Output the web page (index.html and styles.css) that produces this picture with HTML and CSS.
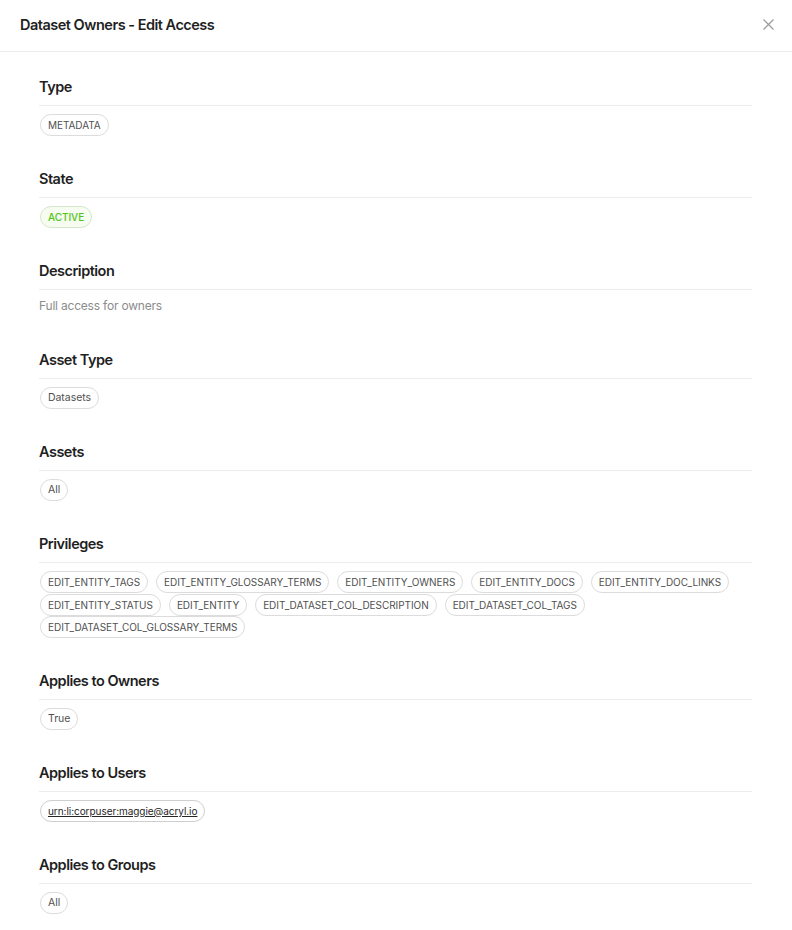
FILE: index.html
```html
<!DOCTYPE html>
<html lang="en">
<head>
    <meta charset="UTF-8">
    <meta name="viewport" content="width=device-width, initial-scale=1.0">
    <title>Dataset Owners - Edit Access</title>
    <link rel="stylesheet" href="styles.css">
</head>
<body>
    <div class="modal">
        <div class="modal-header">
            <h2>Dataset Owners - Edit Access</h2>
            <button class="btn-close" aria-label="Close">
                <svg width="11" height="11" viewBox="0 0 11 11">
                    <path d="M0.5 0.5 L10.5 10.5 M10.5 0.5 L0.5 10.5" stroke="#9a9a9a" stroke-width="1.2" fill="none"/>
                </svg>
            </button>
        </div>

        <div class="modal-body">
            <section class="section">
                <h3>Type</h3>
                <div class="tags">
                    <span class="tag">METADATA</span>
                </div>
            </section>

            <section class="section">
                <h3>State</h3>
                <div class="tags">
                    <span class="tag tag-active">ACTIVE</span>
                </div>
            </section>

            <section class="section">
                <h3>Description</h3>
                <p class="description">Full access for owners</p>
            </section>

            <section class="section">
                <h3>Asset Type</h3>
                <div class="tags">
                    <span class="tag tag-plain">Datasets</span>
                </div>
            </section>

            <section class="section">
                <h3>Assets</h3>
                <div class="tags">
                    <span class="tag tag-plain">All</span>
                </div>
            </section>

            <section class="section">
                <h3>Privileges</h3>
                <div class="tags">
                    <span class="tag">EDIT_ENTITY_TAGS</span>
                    <span class="tag">EDIT_ENTITY_GLOSSARY_TERMS</span>
                    <span class="tag">EDIT_ENTITY_OWNERS</span>
                    <span class="tag">EDIT_ENTITY_DOCS</span>
                    <span class="tag">EDIT_ENTITY_DOC_LINKS</span>
                    <span class="tag">EDIT_ENTITY_STATUS</span>
                    <span class="tag">EDIT_ENTITY</span>
                    <span class="tag">EDIT_DATASET_COL_DESCRIPTION</span>
                    <span class="tag">EDIT_DATASET_COL_TAGS</span>
                    <span class="tag">EDIT_DATASET_COL_GLOSSARY_TERMS</span>
                </div>
            </section>

            <section class="section">
                <h3>Applies to Owners</h3>
                <div class="tags">
                    <span class="tag tag-plain">True</span>
                </div>
            </section>

            <section class="section">
                <h3>Applies to Users</h3>
                <div class="tags">
                    <a class="tag tag-plain tag-link" href="#">urn:li:corpuser:maggie@acryl.io</a>
                </div>
            </section>

            <section class="section">
                <h3>Applies to Groups</h3>
                <div class="tags">
                    <span class="tag tag-plain">All</span>
                </div>
            </section>
        </div>
    </div>
</body>
</html>
```

FILE: styles.css
```css
* {
    margin: 0;
    padding: 0;
    box-sizing: border-box;
}

body {
    background: #ffffff;
    font-family: 'Inter', 'Noto Sans', sans-serif;
    color: #262626;
}

.modal {
    width: 792px;
}

.modal-header {
    height: 52px;
    display: flex;
    align-items: center;
    justify-content: space-between;
    padding: 0 16px 3px 20px;
    border-bottom: 1px solid #ececec;
}

.modal-header h2 {
    font-size: 14.5px;
    font-weight: 600;
    letter-spacing: -0.5px;
    color: #1f1f1f;
}

.btn-close {
    border: none;
    background: transparent;
    width: 16px;
    height: 16px;
    display: flex;
    align-items: center;
    justify-content: center;
    cursor: pointer;
}

.modal-body {
    padding: 25px 40px 20px 39px;
}

.section {
    margin-bottom: 33px;
}

.section h3 {
    font-size: 14.5px;
    font-weight: 600;
    line-height: 20px;
    letter-spacing: -0.5px;
    color: #1f1f1f;
    padding-bottom: 8px;
    border-bottom: 1px solid #ececec;
}

.tags {
    display: flex;
    flex-wrap: wrap;
    column-gap: 8px;
    row-gap: 0.5px;
    margin-top: 8px;
    padding-left: 1px;
}

.tag {
    display: inline-block;
    height: 22px;
    line-height: 20px;
    padding: 0 7px;
    border: 1px solid #dcdcdc;
    border-radius: 11px;
    font-size: 10px;
    letter-spacing: -0.05px;
    color: #505050;
    background: #ffffff;
    white-space: nowrap;
}

.tag-plain {
    font-size: 10.5px;
}

.tag-active {
    background: #f6fcf0;
    border-color: #d6e6cc;
    color: #52c41a;
    font-weight: 500;
}

.tag-link {
    font-size: 10px;
    letter-spacing: -0.05px;
    color: #262626;
    text-decoration: underline;
    border-color: #cfcfcf;
}

.description {
    margin-top: 5px;
    font-size: 12px;
    line-height: 22px;
    letter-spacing: -0.2px;
    color: #8c8c8c;
}
```
